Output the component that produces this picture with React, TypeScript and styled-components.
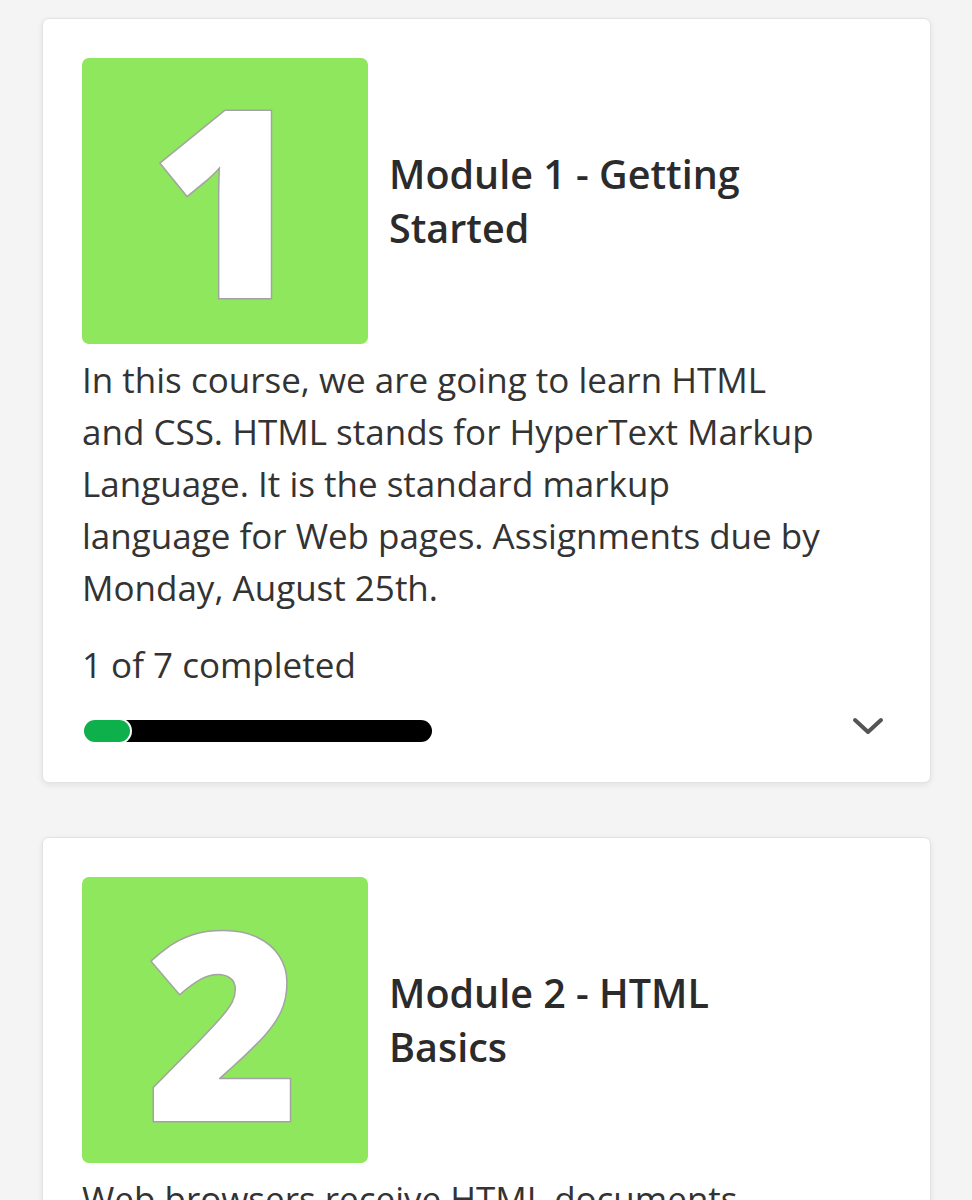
import React from "react";
import styled, { createGlobalStyle } from "styled-components";

const Global = createGlobalStyle`
  html, body { margin: 0; padding: 0; background: #f4f4f4; }
  body { font-family: "Open Sans", "Noto Sans", sans-serif; color: #2b2b2b; }
`;

const Page = styled.div`
  padding: 18px 41px 40px 42px;
  display: flex;
  flex-direction: column;
  gap: 54px;
`;

const Card = styled.section`
  background: #fff;
  border: 1px solid #e3e3e3;
  border-radius: 7px;
  box-shadow: 0 2px 6px rgba(0, 0, 0, 0.08);
  padding: 39px 40px 40px 39px;
`;

const Header = styled.div`
  display: flex;
  align-items: center;
  gap: 21px;
`;

const Thumb = styled.div`
  width: 286px;
  height: 286px;
  flex: none;
  border-radius: 7px;
  background: #8ee75c;
  display: flex;
  align-items: center;
  justify-content: center;
`;

const Digit = styled.span<{ $dx: number; $dy: number }>`
  font-family: "Open Sans", "DejaVu Sans", sans-serif;
  font-weight: 800;
  font-size: 262px;
  line-height: 1;
  color: #fff;
  -webkit-text-stroke: 3px #a3a3a3;
  paint-order: stroke fill;
  transform: translate(${(p) => p.$dx}px, ${(p) => p.$dy}px);
`;

const Title = styled.h2`
  margin: 0;
  font-size: 39.5px;
  font-weight: 600;
  line-height: 54px;
  color: #2b2b2b;
`;

const Body = styled.p`
  margin: 10px 0 0;
  max-width: 739px;
  font-size: 35px;
  line-height: 52px;
  color: #333;
`;

const Status = styled.div`
  margin-top: 25px;
  font-size: 35px;
  line-height: 52px;
  color: #333;
`;

const ProgressRow = styled.div`
  margin-top: 29px;
  display: flex;
  align-items: center;
  justify-content: space-between;
`;

const Track = styled.div`
  width: 348px;
  height: 22px;
  border-radius: 11px;
  background: #000;
  margin-left: 2px;
  display: flex;
`;

const Fill = styled.div`
  height: 100%;
  border-radius: 11px;
  background: #0db04a;
  box-shadow: 0 0 0 2px #fff;
`;

const Chevron = styled.button`
  border: none;
  background: none;
  padding: 0;
  margin-right: 6px;
  margin-top: -10px;
  display: flex;
  cursor: pointer;
`;

type Module = {
  n: string;
  dx: number;
  dy: number;
  title: React.ReactNode;
  body: string;
  done: number;
  total: number;
};

const modules: Module[] = [
  {
    n: "1",
    dx: 2,
    dy: -4,
    title: (
      <>
        Module 1 - Getting
        <br />
        Started
      </>
    ),
    body:
      "In this course, we are going to learn HTML and CSS. HTML stands for HyperText Markup Language. It is the standard markup language for Web pages. Assignments due by Monday, August 25th.",
    done: 1,
    total: 7,
  },
  {
    n: "2",
    dx: -2,
    dy: 0,
    title: (
      <>
        Module 2 - HTML
        <br />
        Basics
      </>
    ),
    body:
      "Web browsers receive HTML documents from a web server or from local storage and render the documents into multimedia web pages.",
    done: 0,
    total: 6,
  },
];

export default function App() {
  return (
    <>
      <Global />
      <Page>
        {modules.map((m) => (
          <Card key={m.n}>
            <Header>
              <Thumb>
                <Digit $dx={m.dx} $dy={m.dy}>
                  {m.n}
                </Digit>
              </Thumb>
              <Title>{m.title}</Title>
            </Header>
            <Body>{m.body}</Body>
            <Status>
              {m.done} of {m.total} completed
            </Status>
            <ProgressRow>
              <Track>
                <Fill style={{ width: `${(m.done / m.total) * 100 - 1}%` }} />
              </Track>
              <Chevron aria-label="Expand">
                <svg width="32" height="20" viewBox="0 0 32 20">
                  <path
                    d="M3 4 L16 16 L29 4"
                    fill="none"
                    stroke="#555"
                    strokeWidth="4"
                    strokeLinecap="round"
                    strokeLinejoin="round"
                  />
                </svg>
              </Chevron>
            </ProgressRow>
          </Card>
        ))}
      </Page>
    </>
  );
}
